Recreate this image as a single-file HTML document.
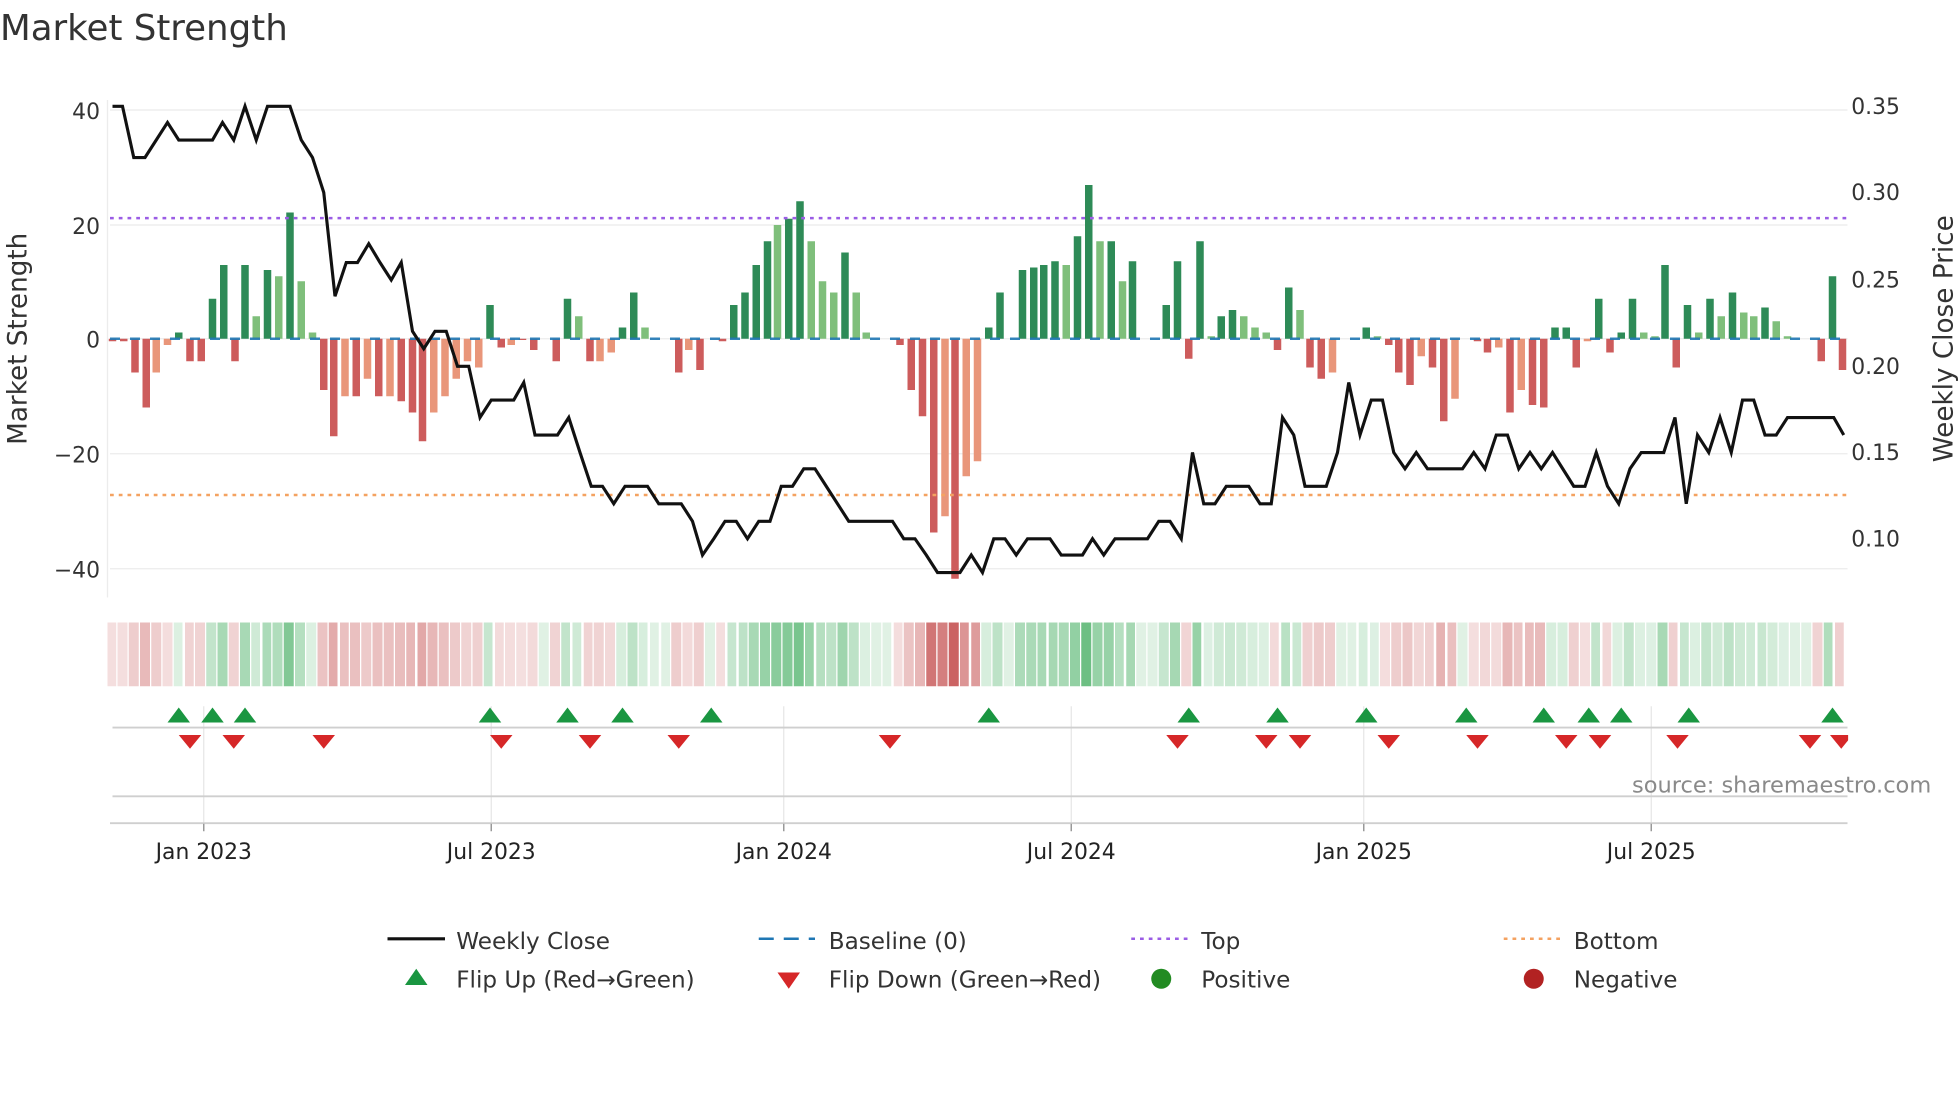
<!DOCTYPE html>
<html><head><meta charset="utf-8"><style>
html,body{margin:0;padding:0;background:#fff;overflow:hidden;}
#w{position:absolute;left:0;top:0;width:1568px;height:882px;transform:scale(1.25);transform-origin:0 0;font-family:"DejaVu Sans","Liberation Sans",sans-serif;}
svg{position:absolute;left:0;top:0;display:block;font-family:"DejaVu Sans","Liberation Sans",sans-serif;}
#bars{position:absolute;left:85.56px;top:71px;height:400px;width:1400px;display:flex;}
#bars i{position:relative;width:8.885px;flex:none;height:400px;}
#bars i::after{content:"";position:absolute;left:1.44px;width:6px;height:calc(var(--h)*4.57px);}
#bars i.a::after{bottom:200px;background:#2e8b57;}
#bars i.b::after{bottom:200px;background:#7fbf7b;}
#bars i.c::after{top:200px;background:#cd5c5c;}
#bars i.d::after{top:200px;background:#e9967a;}
#strip{position:absolute;left:85.56px;top:498px;height:51px;width:1400px;display:flex;}
#strip i{width:7.685px;margin-right:1.2px;flex:none;height:51px;}
#strip i.a,#strip i.b{background:rgba(60,170,90,min(0.75,calc(0.16 + var(--h)*0.022)));}
#strip i.c,#strip i.d{background:rgba(190,60,60,min(0.8,calc(0.16 + var(--h)*0.016)));}
</style></head><body>
<div id="w">
<svg width="1568" height="882" viewBox="0 0 1568 882" xmlns="http://www.w3.org/2000/svg">
<defs><clipPath id="cp"><rect x="86" y="0" width="1392.5" height="881"/></clipPath></defs>
<text x="0" y="32" font-size="28.5" fill="#333">Market Strength</text>
<g stroke="#ebebeb" stroke-width="1">
<line x1="88" y1="88" x2="1478" y2="88"/><line x1="88" y1="180" x2="1478" y2="180"/>
<line x1="88" y1="271" x2="1478" y2="271"/><line x1="88" y1="363" x2="1478" y2="363"/>
<line x1="88" y1="455" x2="1478" y2="455"/>
</g>
<line x1="86" y1="80" x2="86" y2="478" stroke="#ececec"/>
<g font-size="17.5" fill="#333" text-anchor="end">
<text x="80" y="95">40</text><text x="80" y="187">20</text><text x="80" y="278">0</text>
<text x="80" y="370">−20</text><text x="80" y="462">−40</text>
</g>
<g font-size="17.5" fill="#333">
<text x="1481" y="91">0.35</text><text x="1481" y="160">0.30</text><text x="1481" y="230">0.25</text>
<text x="1481" y="299">0.20</text><text x="1481" y="368">0.15</text><text x="1481" y="437">0.10</text>
</g>
<text transform="translate(21,271) rotate(-90)" font-size="21" fill="#333" text-anchor="middle">Market Strength</text>
<text transform="translate(1562,271) rotate(-90)" font-size="21" fill="#333" text-anchor="middle">Weekly Close Price</text>
<g stroke="#e6e6e6" stroke-width="1">
<line x1="163" y1="565" x2="163" y2="658"/><line x1="393" y1="565" x2="393" y2="658"/>
<line x1="627" y1="565" x2="627" y2="658"/><line x1="857" y1="565" x2="857" y2="658"/>
<line x1="1091" y1="565" x2="1091" y2="658"/><line x1="1321" y1="565" x2="1321" y2="658"/>
</g>
<line x1="90" y1="582" x2="1478" y2="582" stroke="#cfcfcf" stroke-width="1.5"/>
<line x1="90" y1="637" x2="1478" y2="637" stroke="#cfcfcf" stroke-width="1.5"/>
<line x1="88" y1="658.5" x2="1478" y2="658.5" stroke="#cfcfcf" stroke-width="1.5"/>
<g stroke="#999" stroke-width="1.2">
<line x1="163" y1="659" x2="163" y2="665"/><line x1="393" y1="659" x2="393" y2="665"/>
<line x1="627" y1="659" x2="627" y2="665"/><line x1="857" y1="659" x2="857" y2="665"/>
<line x1="1091" y1="659" x2="1091" y2="665"/><line x1="1321" y1="659" x2="1321" y2="665"/>
</g>
<g clip-path="url(#cp)" fill="#1a9641">
<polygon points="134,578 152,578 143,566"/><polygon points="161,578 179,578 170,566"/><polygon points="187,578 205,578 196,566"/>
<polygon points="383,578 401,578 392,566"/><polygon points="445,578 463,578 454,566"/><polygon points="489,578 507,578 498,566"/>
<polygon points="560,578 578,578 569,566"/><polygon points="782,578 800,578 791,566"/><polygon points="942,578 960,578 951,566"/>
<polygon points="1013,578 1031,578 1022,566"/><polygon points="1084,578 1102,578 1093,566"/><polygon points="1164,578 1182,578 1173,566"/>
<polygon points="1226,578 1244,578 1235,566"/><polygon points="1262,578 1280,578 1271,566"/><polygon points="1288,578 1306,578 1297,566"/>
<polygon points="1342,578 1360,578 1351,566"/><polygon points="1457,578 1475,578 1466,566"/>
</g>
<g clip-path="url(#cp)" fill="#d62728">
<polygon points="143,588 161,588 152,599"/><polygon points="178,588 196,588 187,599"/><polygon points="250,588 268,588 259,599"/>
<polygon points="392,588 410,588 401,599"/><polygon points="463,588 481,588 472,599"/><polygon points="534,588 552,588 543,599"/>
<polygon points="703,588 721,588 712,599"/><polygon points="933,588 951,588 942,599"/><polygon points="1004,588 1022,588 1013,599"/>
<polygon points="1031,588 1049,588 1040,599"/><polygon points="1102,588 1120,588 1111,599"/><polygon points="1173,588 1191,588 1182,599"/>
<polygon points="1244,588 1262,588 1253,599"/><polygon points="1271,588 1289,588 1280,599"/><polygon points="1333,588 1351,588 1342,599"/>
<polygon points="1439,588 1457,588 1448,599"/><polygon points="1464,588 1482,588 1473,599"/>
</g>
<text x="1545" y="634" font-size="18" fill="#8a8a8a" text-anchor="end">source: sharemaestro.com</text>
<g font-size="17.5" fill="#222" text-anchor="middle">
<text x="163" y="687">Jan 2023</text><text x="393" y="687">Jul 2023</text><text x="627" y="687">Jan 2024</text>
<text x="857" y="687">Jul 2024</text><text x="1091" y="687">Jan 2025</text><text x="1321" y="687">Jul 2025</text>
</g>
<g font-size="18.5" fill="#333">
<line x1="310" y1="751" x2="356" y2="751" stroke="#111" stroke-width="2.5"/>
<text x="365" y="759">Weekly Close</text>
<line x1="607" y1="751" x2="652" y2="751" stroke="#1f77b4" stroke-width="2" stroke-dasharray="12,8"/>
<text x="663" y="759">Baseline (0)</text>
<line x1="905" y1="751" x2="950" y2="751" stroke="#9b5de5" stroke-width="2" stroke-dasharray="3,4"/>
<text x="961" y="759">Top</text>
<line x1="1203" y1="751" x2="1248" y2="751" stroke="#f4a261" stroke-width="2" stroke-dasharray="3,4"/>
<text x="1259" y="759">Bottom</text>
<polygon points="324,788 342,788 333,775" fill="#1a9641"/>
<text x="365" y="790">Flip Up (Red→Green)</text>
<polygon points="622,778 640,778 631,791" fill="#d62728"/>
<text x="663" y="790">Flip Down (Green→Red)</text>
<circle cx="929" cy="783" r="8" fill="#228b22"/>
<text x="961" y="790">Positive</text>
<circle cx="1227" cy="783" r="8" fill="#b22222"/>
<text x="1259" y="790">Negative</text>
</g>
</svg>
<div id="bars"><i class="c" style="--h:.5"></i><i class="c" style="--h:.5"></i><i class="c" style="--h:6"></i><i class="c" style="--h:12"></i><i class="d" style="--h:6"></i><i class="d" style="--h:1"></i><i class="a" style="--h:1"></i><i class="c" style="--h:4"></i><i class="c" style="--h:4"></i><i class="a" style="--h:7"></i><i class="a" style="--h:13"></i><i class="c" style="--h:4"></i><i class="a" style="--h:13"></i><i class="b" style="--h:4"></i><i class="a" style="--h:12"></i><i class="b" style="--h:11"></i><i class="a" style="--h:22"></i><i class="b" style="--h:10"></i><i class="b" style="--h:1"></i><i class="c" style="--h:9"></i><i class="c" style="--h:17"></i><i class="d" style="--h:10"></i><i class="c" style="--h:10"></i><i class="d" style="--h:7"></i><i class="c" style="--h:10"></i><i class="d" style="--h:10"></i><i class="c" style="--h:11"></i><i class="c" style="--h:13"></i><i class="c" style="--h:18"></i><i class="d" style="--h:13"></i><i class="d" style="--h:10"></i><i class="d" style="--h:7"></i><i class="d" style="--h:4"></i><i class="d" style="--h:5"></i><i class="a" style="--h:6"></i><i class="c" style="--h:1.5"></i><i class="d" style="--h:1"></i><i class="c" style="--h:.3"></i><i class="c" style="--h:2"></i><i class="a" style="--h:0"></i><i class="c" style="--h:4"></i><i class="a" style="--h:7"></i><i class="b" style="--h:4"></i><i class="c" style="--h:4"></i><i class="d" style="--h:4"></i><i class="d" style="--h:2.5"></i><i class="a" style="--h:2"></i><i class="a" style="--h:8"></i><i class="b" style="--h:2"></i><i class="a" style="--h:0"></i><i class="a" style="--h:0"></i><i class="c" style="--h:6"></i><i class="d" style="--h:2"></i><i class="c" style="--h:5.5"></i><i class="a" style="--h:0"></i><i class="c" style="--h:.5"></i><i class="a" style="--h:6"></i><i class="a" style="--h:8"></i><i class="a" style="--h:13"></i><i class="a" style="--h:17"></i><i class="b" style="--h:20"></i><i class="a" style="--h:21"></i><i class="a" style="--h:24"></i><i class="b" style="--h:17"></i><i class="b" style="--h:10"></i><i class="b" style="--h:8"></i><i class="a" style="--h:15"></i><i class="b" style="--h:8"></i><i class="b" style="--h:1"></i><i class="a" style="--h:0"></i><i class="a" style="--h:0"></i><i class="c" style="--h:1"></i><i class="c" style="--h:9"></i><i class="c" style="--h:13.5"></i><i class="c" style="--h:34"></i><i class="d" style="--h:31"></i><i class="c" style="--h:42"></i><i class="d" style="--h:24"></i><i class="d" style="--h:21.5"></i><i class="a" style="--h:2"></i><i class="a" style="--h:8"></i><i class="a" style="--h:0"></i><i class="a" style="--h:12"></i><i class="a" style="--h:12.5"></i><i class="a" style="--h:13"></i><i class="a" style="--h:13.5"></i><i class="b" style="--h:13"></i><i class="a" style="--h:18"></i><i class="a" style="--h:27"></i><i class="b" style="--h:17"></i><i class="a" style="--h:17"></i><i class="b" style="--h:10"></i><i class="a" style="--h:13.5"></i><i class="a" style="--h:0"></i><i class="a" style="--h:0"></i><i class="a" style="--h:6"></i><i class="a" style="--h:13.5"></i><i class="c" style="--h:3.5"></i><i class="a" style="--h:17"></i><i class="b" style="--h:.5"></i><i class="a" style="--h:4"></i><i class="a" style="--h:5"></i><i class="b" style="--h:4"></i><i class="b" style="--h:2"></i><i class="b" style="--h:1"></i><i class="c" style="--h:2"></i><i class="a" style="--h:9"></i><i class="b" style="--h:5"></i><i class="c" style="--h:5"></i><i class="c" style="--h:7"></i><i class="d" style="--h:6"></i><i class="a" style="--h:0"></i><i class="a" style="--h:0"></i><i class="a" style="--h:2"></i><i class="b" style="--h:.5"></i><i class="c" style="--h:1"></i><i class="c" style="--h:6"></i><i class="c" style="--h:8"></i><i class="d" style="--h:3"></i><i class="c" style="--h:5"></i><i class="c" style="--h:14.5"></i><i class="d" style="--h:10.5"></i><i class="a" style="--h:0"></i><i class="c" style="--h:.5"></i><i class="c" style="--h:2.5"></i><i class="d" style="--h:1.5"></i><i class="c" style="--h:13"></i><i class="d" style="--h:9"></i><i class="c" style="--h:11.5"></i><i class="c" style="--h:12"></i><i class="a" style="--h:2"></i><i class="a" style="--h:2"></i><i class="c" style="--h:5"></i><i class="d" style="--h:.5"></i><i class="a" style="--h:7"></i><i class="c" style="--h:2.5"></i><i class="a" style="--h:1"></i><i class="a" style="--h:7"></i><i class="b" style="--h:1"></i><i class="b" style="--h:.5"></i><i class="a" style="--h:13"></i><i class="c" style="--h:5"></i><i class="a" style="--h:6"></i><i class="b" style="--h:1"></i><i class="a" style="--h:7"></i><i class="b" style="--h:4"></i><i class="a" style="--h:8"></i><i class="b" style="--h:4.5"></i><i class="b" style="--h:4"></i><i class="a" style="--h:5.5"></i><i class="b" style="--h:3"></i><i class="b" style="--h:.5"></i><i class="a" style="--h:0"></i><i class="a" style="--h:0"></i><i class="c" style="--h:4"></i><i class="a" style="--h:11"></i><i class="c" style="--h:5.5"></i></div>
<div id="strip"><i class="c" style="--h:.5"></i><i class="c" style="--h:.5"></i><i class="c" style="--h:6"></i><i class="c" style="--h:12"></i><i class="d" style="--h:6"></i><i class="d" style="--h:1"></i><i class="a" style="--h:1"></i><i class="c" style="--h:4"></i><i class="c" style="--h:4"></i><i class="a" style="--h:7"></i><i class="a" style="--h:13"></i><i class="c" style="--h:4"></i><i class="a" style="--h:13"></i><i class="b" style="--h:4"></i><i class="a" style="--h:12"></i><i class="b" style="--h:11"></i><i class="a" style="--h:22"></i><i class="b" style="--h:10"></i><i class="b" style="--h:1"></i><i class="c" style="--h:9"></i><i class="c" style="--h:17"></i><i class="d" style="--h:10"></i><i class="c" style="--h:10"></i><i class="d" style="--h:7"></i><i class="c" style="--h:10"></i><i class="d" style="--h:10"></i><i class="c" style="--h:11"></i><i class="c" style="--h:13"></i><i class="c" style="--h:18"></i><i class="d" style="--h:13"></i><i class="d" style="--h:10"></i><i class="d" style="--h:7"></i><i class="d" style="--h:4"></i><i class="d" style="--h:5"></i><i class="a" style="--h:6"></i><i class="c" style="--h:1.5"></i><i class="d" style="--h:1"></i><i class="c" style="--h:.3"></i><i class="c" style="--h:2"></i><i class="a" style="--h:0"></i><i class="c" style="--h:4"></i><i class="a" style="--h:7"></i><i class="b" style="--h:4"></i><i class="c" style="--h:4"></i><i class="d" style="--h:4"></i><i class="d" style="--h:2.5"></i><i class="a" style="--h:2"></i><i class="a" style="--h:8"></i><i class="b" style="--h:2"></i><i class="a" style="--h:0"></i><i class="a" style="--h:0"></i><i class="c" style="--h:6"></i><i class="d" style="--h:2"></i><i class="c" style="--h:5.5"></i><i class="a" style="--h:0"></i><i class="c" style="--h:.5"></i><i class="a" style="--h:6"></i><i class="a" style="--h:8"></i><i class="a" style="--h:13"></i><i class="a" style="--h:17"></i><i class="b" style="--h:20"></i><i class="a" style="--h:21"></i><i class="a" style="--h:24"></i><i class="b" style="--h:17"></i><i class="b" style="--h:10"></i><i class="b" style="--h:8"></i><i class="a" style="--h:15"></i><i class="b" style="--h:8"></i><i class="b" style="--h:1"></i><i class="a" style="--h:0"></i><i class="a" style="--h:0"></i><i class="c" style="--h:1"></i><i class="c" style="--h:9"></i><i class="c" style="--h:13.5"></i><i class="c" style="--h:34"></i><i class="d" style="--h:31"></i><i class="c" style="--h:42"></i><i class="d" style="--h:24"></i><i class="d" style="--h:21.5"></i><i class="a" style="--h:2"></i><i class="a" style="--h:8"></i><i class="a" style="--h:0"></i><i class="a" style="--h:12"></i><i class="a" style="--h:12.5"></i><i class="a" style="--h:13"></i><i class="a" style="--h:13.5"></i><i class="b" style="--h:13"></i><i class="a" style="--h:18"></i><i class="a" style="--h:27"></i><i class="b" style="--h:17"></i><i class="a" style="--h:17"></i><i class="b" style="--h:10"></i><i class="a" style="--h:13.5"></i><i class="a" style="--h:0"></i><i class="a" style="--h:0"></i><i class="a" style="--h:6"></i><i class="a" style="--h:13.5"></i><i class="c" style="--h:3.5"></i><i class="a" style="--h:17"></i><i class="b" style="--h:.5"></i><i class="a" style="--h:4"></i><i class="a" style="--h:5"></i><i class="b" style="--h:4"></i><i class="b" style="--h:2"></i><i class="b" style="--h:1"></i><i class="c" style="--h:2"></i><i class="a" style="--h:9"></i><i class="b" style="--h:5"></i><i class="c" style="--h:5"></i><i class="c" style="--h:7"></i><i class="d" style="--h:6"></i><i class="a" style="--h:0"></i><i class="a" style="--h:0"></i><i class="a" style="--h:2"></i><i class="b" style="--h:.5"></i><i class="c" style="--h:1"></i><i class="c" style="--h:6"></i><i class="c" style="--h:8"></i><i class="d" style="--h:3"></i><i class="c" style="--h:5"></i><i class="c" style="--h:14.5"></i><i class="d" style="--h:10.5"></i><i class="a" style="--h:0"></i><i class="c" style="--h:.5"></i><i class="c" style="--h:2.5"></i><i class="d" style="--h:1.5"></i><i class="c" style="--h:13"></i><i class="d" style="--h:9"></i><i class="c" style="--h:11.5"></i><i class="c" style="--h:12"></i><i class="a" style="--h:2"></i><i class="a" style="--h:2"></i><i class="c" style="--h:5"></i><i class="d" style="--h:.5"></i><i class="a" style="--h:7"></i><i class="c" style="--h:2.5"></i><i class="a" style="--h:1"></i><i class="a" style="--h:7"></i><i class="b" style="--h:1"></i><i class="b" style="--h:.5"></i><i class="a" style="--h:13"></i><i class="c" style="--h:5"></i><i class="a" style="--h:6"></i><i class="b" style="--h:1"></i><i class="a" style="--h:7"></i><i class="b" style="--h:4"></i><i class="a" style="--h:8"></i><i class="b" style="--h:4.5"></i><i class="b" style="--h:4"></i><i class="a" style="--h:5.5"></i><i class="b" style="--h:3"></i><i class="b" style="--h:.5"></i><i class="a" style="--h:0"></i><i class="a" style="--h:0"></i><i class="c" style="--h:4"></i><i class="a" style="--h:11"></i><i class="c" style="--h:5.5"></i></div>
<svg width="1568" height="882" viewBox="0 0 1568 882" xmlns="http://www.w3.org/2000/svg">
<line x1="88" y1="271" x2="1478" y2="271" stroke="#1f77b4" stroke-width="2" stroke-dasharray="8,8" opacity="0.9"/>
<line x1="88" y1="174.5" x2="1478" y2="174.5" stroke="#9b5de5" stroke-width="2" stroke-dasharray="3,4"/>
<line x1="88" y1="396" x2="1478" y2="396" stroke="#f4a261" stroke-width="2" stroke-dasharray="3,4"/>
<polyline fill="none" stroke="#111" stroke-width="2.5" points="90,85 98,85 107,126 116,126 125,112 134,98 143,112 170,112 178,98 187,112 196,85 205,112 214,85 232,85 241,112 250,126 259,154 268,237 277,210 286,210 295,195 304,210 313,224 321,210 330,265 339,279 348,265 357,265 366,293 375,293 384,334 393,320 411,320 419,306 428,348 446,348 455,334 464,362 473,389 482,389 491,403 500,389 518,389 527,403 545,403 554,417 562,444 571,431 580,417 589,417 598,431 607,417 616,417 625,389 634,389 643,375 652,375 661,389 679,417 714,417 723,431 732,431 741,444 750,458 768,458 777,444 786,458 795,431 804,431 813,444 822,431 840,431 849,444 866,444 874,431 883,444 892,431 918,431 927,417 936,417 945,431 954,362 963,403 972,403 981,389 999,389 1008,403 1017,403 1026,334 1035,348 1044,389 1061,389 1070,362 1079,306 1088,348 1097,320 1106,320 1115,362 1124,375 1133,362 1142,375 1170,375 1179,362 1188,375 1197,348 1206,348 1215,375 1224,362 1233,375 1242,362 1259,389 1268,389 1277,362 1286,389 1295,403 1304,375 1313,362 1331,362 1340,334 1349,403 1358,348 1367,362 1376,334 1385,362 1394,320 1403,320 1412,348 1421,348 1430,334 1467,334 1475,348"/>
</svg>
</div>
</body></html>
